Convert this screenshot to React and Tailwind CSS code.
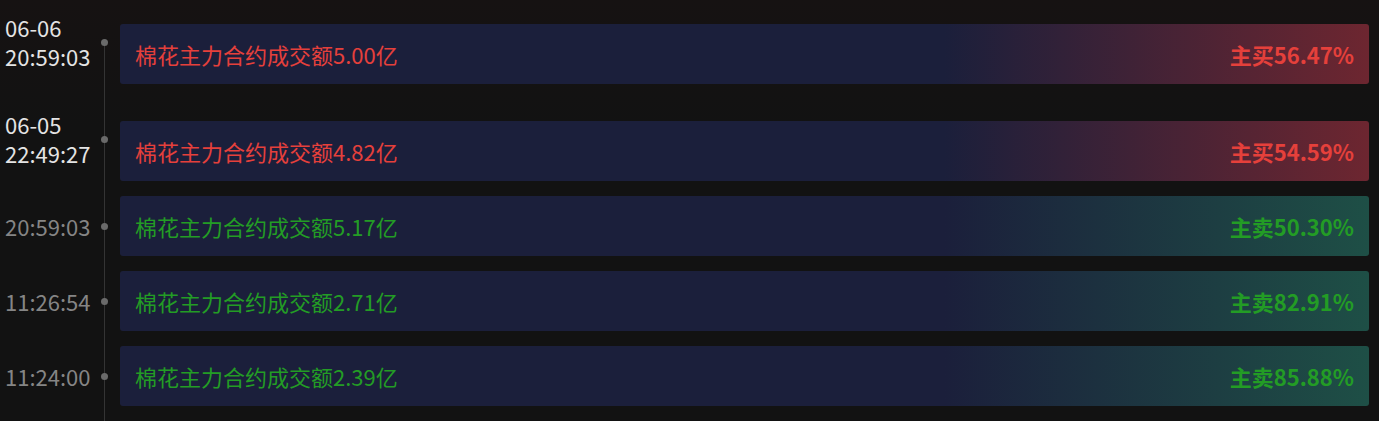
const rows = [
  { date: "06-06", time: "20:59:03", amount: "5.00", side: "buy", pct: "56.47" },
  { date: "06-05", time: "22:49:27", amount: "4.82", side: "buy", pct: "54.59" },
  { time: "20:59:03", amount: "5.17", side: "sell", pct: "50.30" },
  { time: "11:26:54", amount: "2.71", side: "sell", pct: "82.91" },
  { time: "11:24:00", amount: "2.39", side: "sell", pct: "85.88" },
];

const TimeLabel = ({ row }) => (
  <div className={`flex items-center shrink-0 ${row.date ? "-mt-[24px]" : ""}`}>
    <div
      className={`w-[97px] pl-[5px] text-[22px] leading-[29px] ${
        row.date ? "text-[#e4e4e4]" : "text-[#858585]"
      }`}
    >
      {row.date && <div>{row.date}</div>}
      <div>{row.time}</div>
    </div>
    <div className="w-[15px] flex justify-center">
      <span className="block w-[7px] h-[7px] rounded-full bg-[#6a6a6a]" />
    </div>
  </div>
);

const TradeCard = ({ row }) => {
  const buy = row.side === "buy";
  return (
    <div
      className={`flex-1 h-[60px] ml-[8px] mr-[10px] rounded-[3px] px-[15px] flex items-center justify-between ${
        buy
          ? "bg-[linear-gradient(to_right,#1b1f3b_66%,#6d2630_100%)] text-[#e5403b]"
          : "bg-[linear-gradient(to_right,#1b1f3b_66%,#1e4f46_100%)] text-[#239c25]"
      }`}
    >
      <span className="text-[22px]">棉花主力合约成交额{row.amount}亿</span>
      <span className="text-[22px] font-bold">
        {buy ? "主买" : "主卖"}
        {row.pct}%
      </span>
    </div>
  );
};

export default function App() {
  return (
    <div
      className="relative w-[1379px] h-[421px] overflow-hidden bg-[linear-gradient(to_bottom,#161212,#121212_30%)] pt-[24px]"
      style={{ fontFamily: '"Noto Sans CJK SC", "Noto Sans", sans-serif' }}
    >
      {/* timeline axis */}
      <div className="absolute left-[104px] top-[42px] bottom-0 w-px bg-[#343434]" />

      <div className="relative flex flex-col gap-[15px]">
        {rows.map((row, i) => (
          <div key={i} className={`flex items-center ${i === 0 ? "mb-[22px]" : ""}`}>
            <TimeLabel row={row} />
            <TradeCard row={row} />
          </div>
        ))}
      </div>
    </div>
  );
}
